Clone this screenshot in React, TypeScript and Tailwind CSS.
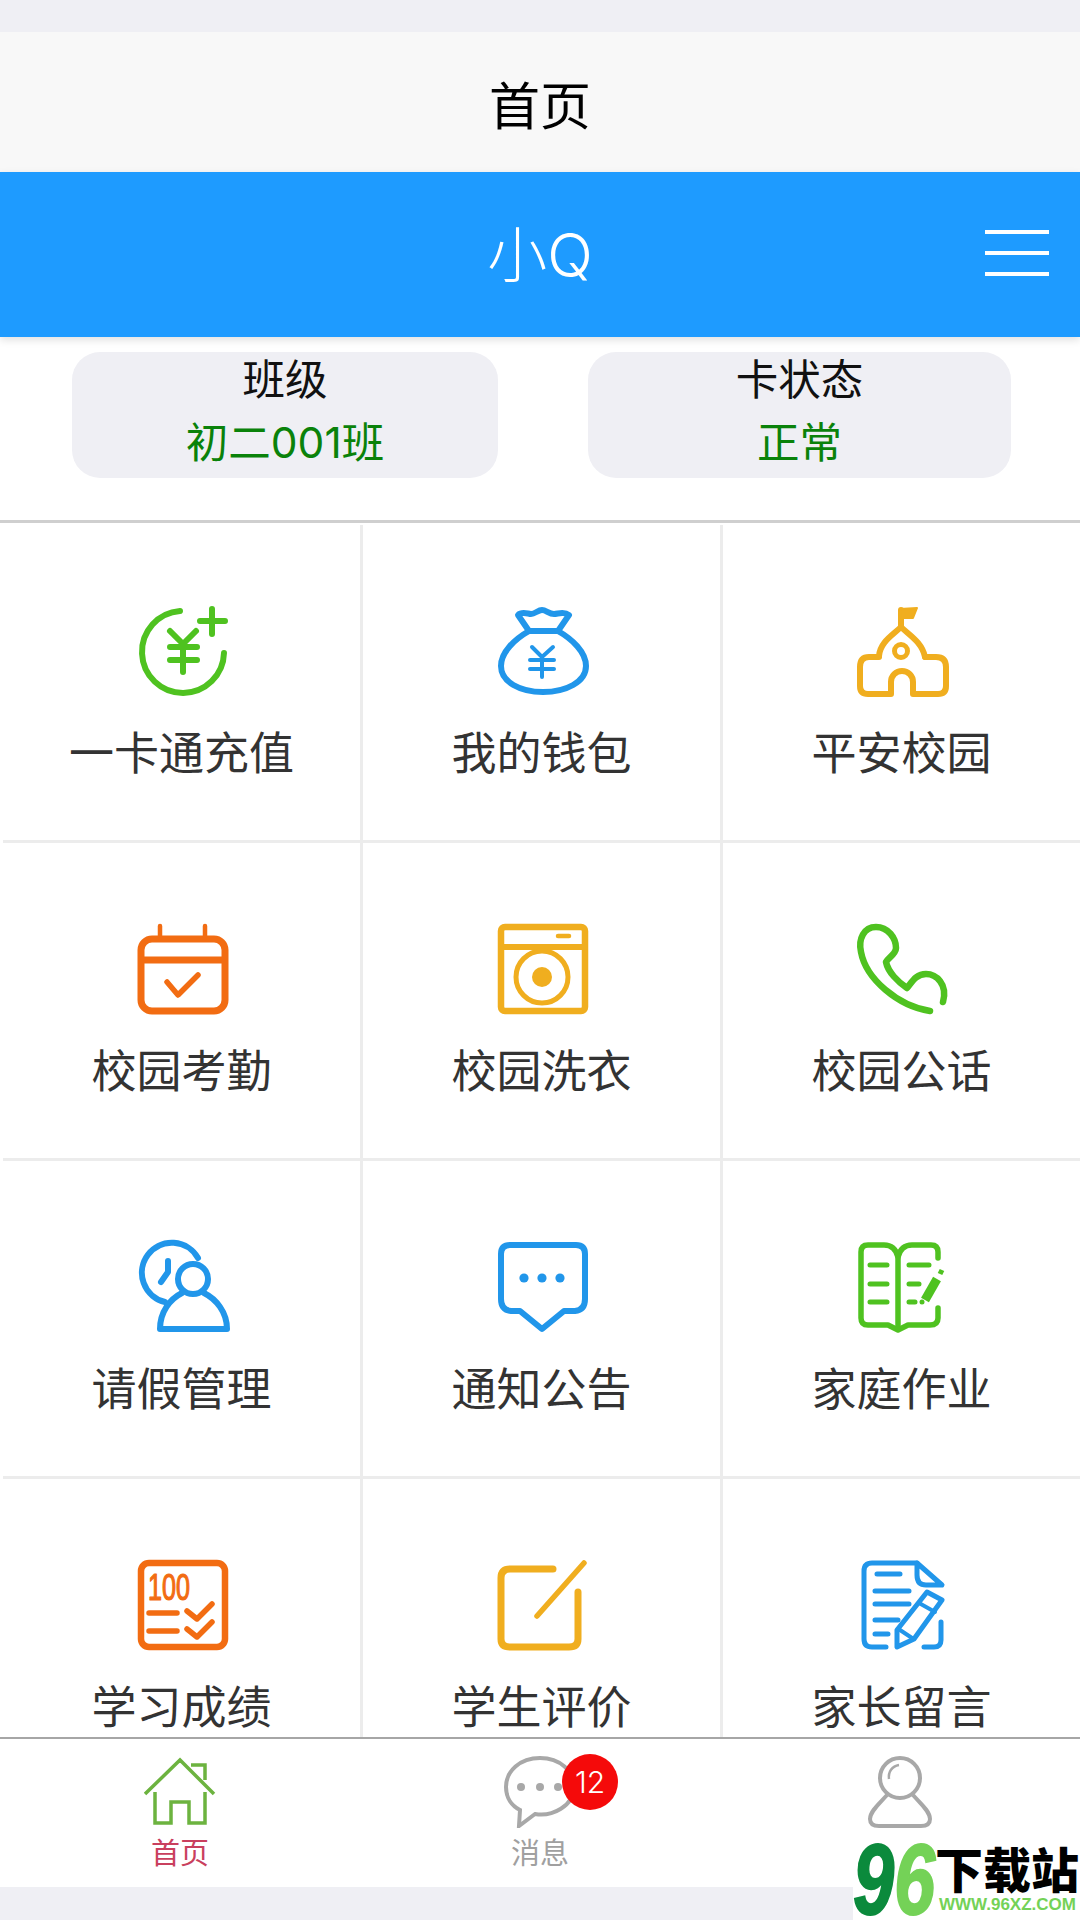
import React from "react";

const GREEN = "#4fc220";
const BLUE = "#2196ea";
const AMBER = "#f0ae1f";
const ORANGE = "#f26c12";

type IconProps = { c: string; children: React.ReactNode };
const Ico = ({ c, children }: IconProps) => (
  <svg className="overflow-visible" width="90" height="90" viewBox="0 0 90 90" fill="none" stroke={c} strokeWidth="6" strokeLinecap="round" strokeLinejoin="round">
    {children}
  </svg>
);

const icons: Record<string, React.ReactNode> = {
  recharge: (
    <Ico c={GREEN}>
      <path d="M42 5A41 41 0 1 0 86 47" />
      <path d="M32 25L45 38L58 25M32 41H59M32 54H59M45 38V66M62 15H87M74 3V28" />
    </Ico>
  ),
  wallet: (
    <Ico c={BLUE}>
      <path d="M31 25H60C74 33 88 46 88 60C88 76 68 86 45 86C22 86 3 76 3 60C3 46 17 33 31 25Z" />
      <path d="M31 25L20 9C24 5 30 8 33 8C37 8 40 4 44 4C48 4 51 8 56 8C60 8 66 5 71 9L60 25" />
      <path strokeWidth="4" d="M34 41L44 51L55 41M32 54H56M32 63H56M44 51V71" />
    </Ico>
  ),
  school: (
    <Ico c={AMBER}>
      <path d="M43 21V4" />
      <path fill={AMBER} strokeWidth="2" d="M42 3L59 2L55 12H43Z" />
      <path d="M21 50C22 36 35 29 43 21C51 29 64 36 67 51" />
      <path d="M21 51H11Q2 51 2 61V80Q2 88 10 88H33V76A11 11 0 0 1 55 76V88H80Q88 88 88 80V61Q88 51 78 51H67" />
      <circle cx="43" cy="45" r="6.5" strokeWidth="5" />
    </Ico>
  ),
  calendar: (
    <Ico c={ORANGE}>
      <rect x="3" y="15" width="84" height="72" rx="11" strokeWidth="7" />
      <path d="M3 36H87" strokeWidth="7" strokeLinecap="butt" />
      <path d="M22 2V14M67 2V14" strokeWidth="4.5" />
      <path d="M29 58L40 71L60 51" strokeWidth="5.5" />
    </Ico>
  ),
  washer: (
    <Ico c={AMBER}>
      <rect x="3" y="3" width="84" height="84" rx="4" strokeWidth="6.5" />
      <path d="M3 23H87" strokeWidth="6" />
      <path d="M60 12H71" strokeWidth="4.5" />
      <circle cx="44" cy="53" r="26" strokeWidth="5" />
      <circle cx="44" cy="53" r="10" fill={AMBER} stroke="none" />
    </Ico>
  ),
  phone: (
    <Ico c={GREEN}>
      <path d="M72 87C40 82 8 55 3 28C0 15 6 3 18 3C30 3 38 14 38 24C38 30 30 34 28 38C30 48 40 58 49 64C54 58 58 50 68 50C78 50 90 60 85 78" strokeWidth="6.5" />
    </Ico>
  ),
  leave: (
    <Ico c={BLUE}>
      <path d="M60 16A30 30 0 1 0 27 60" />
      <path d="M30 19V30L23 40" />
      <circle cx="55" cy="37" r="15" />
      <path d="M22 87H89C89 70 78 57 66 51M44 51C32 57 22 70 22 87" />
    </Ico>
  ),
  notice: (
    <Ico c={BLUE}>
      <path d="M12 3H78Q87 3 87 12V57Q87 68 77 69H66L44 87L22 69H13Q3 68 3 57V12Q3 3 12 3Z" />
      <circle cx="26" cy="36" r="4.6" fill={BLUE} stroke="none" />
      <circle cx="44" cy="36" r="4.6" fill={BLUE} stroke="none" />
      <circle cx="62" cy="36" r="4.6" fill={BLUE} stroke="none" />
    </Ico>
  ),
  homework: (
    <Ico c={GREEN}>
      <path d="M40 15C38 7 33 3 26 3H10Q3 3 3 10V76Q3 83 10 83H30L40 88L50 83H72Q80 83 80 76V66" strokeWidth="5.5" />
      <path d="M80 16V10Q80 3 73 3H54C47 3 42 7 40 15V86" strokeWidth="5.5" />
      <path d="M12 23H29M12 42H29M12 60H29M51 23H71M51 42H61M51 60H57" strokeWidth="5" />
      <circle cx="64" cy="60" r="2.5" fill={GREEN} stroke="none" />
      <path d="M67 58L79 37" strokeWidth="9" strokeLinecap="butt" />
      <path d="M82 32L84 28" strokeWidth="5" strokeLinecap="butt" />
    </Ico>
  ),
  score: (
    <Ico c={ORANGE}>
      <rect x="3" y="3" width="84" height="84" rx="8" strokeWidth="6.5" />
      <text x="10" y="40" fontSize="36" fontFamily="'Liberation Sans',sans-serif" fill={ORANGE} stroke={ORANGE} strokeWidth="1.2" textLength="42" lengthAdjust="spacingAndGlyphs">100</text>
      <path d="M11 53H39M11 71H39M49 51L59 59L74 44M49 69L59 77L74 62" strokeWidth="5.5" />
    </Ico>
  ),
  review: (
    <Ico c={AMBER}>
      <path d="M55 9H12Q3 9 3 18V79Q3 87 12 87H71Q80 87 80 79V32" strokeWidth="7" />
      <path d="M86 3L39 56" strokeWidth="5.5" />
    </Ico>
  ),
  message: (
    <Ico c={BLUE}>
      <path d="M59 3H14Q6 3 6 11V79Q6 87 14 87H28" strokeWidth="5" />
      <path d="M59 3L84 25H68Q59 25 59 15Z" strokeWidth="5" />
      <path d="M19 14H42M17 31H51M17 44H51M17 60H40M17 74H30" strokeWidth="5" />
      <path d="M69 32L84 40L56 79L39 87L39 70Z" strokeWidth="5" />
      <path d="M61 43L77 52M42 70L54 78" strokeWidth="4" />
      <path d="M83 62V80Q83 87 76 87H66" strokeWidth="5" />
    </Ico>
  ),
};

const items: [string, string][] = [
  ["recharge", "一卡通充值"],
  ["wallet", "我的钱包"],
  ["school", "平安校园"],
  ["calendar", "校园考勤"],
  ["washer", "校园洗衣"],
  ["phone", "校园公话"],
  ["leave", "请假管理"],
  ["notice", "通知公告"],
  ["homework", "家庭作业"],
  ["score", "学习成绩"],
  ["review", "学生评价"],
  ["message", "家长留言"],
];

const font = { fontFamily: "'Inter','Noto Sans CJK SC',sans-serif" };

export default function App() {
  return (
    <div className="relative flex h-[1920px] w-[1080px] flex-col overflow-hidden bg-white" style={font}>
      <div className="h-8 shrink-0 bg-[#efeff4]" />
      <div className="flex h-[140px] shrink-0 items-center justify-center bg-[#f8f8f8] pt-[11px] text-[51px] text-black">首页</div>
      <div className="relative z-10 flex h-[165px] shrink-0 items-center justify-center bg-[#1e9bff] text-[60px] font-light text-white shadow-[0_3px_8px_rgba(0,0,0,0.12)]">
        <span>小Q</span>
        <div className="absolute left-[985px] top-[58px] flex w-[64px] flex-col gap-[17px]">
          <div className="h-1 bg-white" />
          <div className="h-1 bg-white" />
          <div className="h-1 bg-white" />
        </div>
      </div>
      <div className="flex h-[183px] shrink-0 gap-[90px] pl-[72px] pt-[15px] text-[42.5px]">
        <div className="h-[126px] w-[426px] rounded-[28px] bg-[#efeff4] text-center">
          <div className="leading-[56px] text-[#111]">班级</div>
          <div className="mt-[6px] leading-[58px] text-[#0a820a]">初二001班</div>
        </div>
        <div className="h-[126px] w-[423px] rounded-[28px] bg-[#efeff4] text-center">
          <div className="leading-[56px] text-[#111]">卡状态</div>
          <div className="mt-[6px] leading-[58px] text-[#0a820a]">正常</div>
        </div>
      </div>
      <div className="min-h-0 flex-1 overflow-hidden border-t-[3px] border-[#cfcfcf] pl-[3px] pt-[2px]">
        <div className="grid grid-cols-[360px_360px_360px]">
          {items.map(([k, label]) => (
            <div key={k} className="flex h-[318px] flex-col items-center border-b-[3px] border-r-[3px] border-[#ececec] pt-[81px]">
              <div className="ml-[3px]">{icons[k]}</div>
              <div className="mt-[32px] text-[45px] leading-[52px] text-[#333]">{label}</div>
            </div>
          ))}
        </div>
      </div>
      <div className="grid h-[150px] shrink-0 grid-cols-3 border-t-2 border-[#a6a6a6] bg-white pt-[17px]">
        <div className="flex flex-col items-center">
          <svg width="72" height="72" viewBox="0 0 72 72" fill="none" stroke="#6cb33f" strokeWidth="3.5">
            <path d="M1 38L36 4L70 38M47 9H61V24M11 36V67H27V46H45V67H61V36" />
          </svg>
          <div className="mt-[6px] text-[29px] leading-[40px] text-[#c9405e]">首页</div>
        </div>
        <div className="flex flex-col items-center">
          <div className="relative h-[72px] w-[72px]">
            <svg width="72" height="72" viewBox="0 0 72 72" fill="none" stroke="#a8a8a8" strokeWidth="4">
              <path d="M36 2C16 2 2 15 2 31C2 42 8 50 16 54L15 70L31 58C48 61 70 50 70 31C70 15 56 2 36 2Z" />
              <circle cx="17" cy="31" r="4" fill="#a8a8a8" stroke="none" />
              <circle cx="36" cy="31" r="4" fill="#a8a8a8" stroke="none" />
              <circle cx="54" cy="31" r="4" fill="#a8a8a8" stroke="none" />
            </svg>
            <div className="absolute left-[58px] top-[-2px] flex h-[56px] w-[56px] items-center justify-center rounded-full bg-[#f50a0a] text-[30px] font-light text-white">12</div>
          </div>
          <div className="mt-[6px] text-[29px] leading-[40px] text-[#a0a0a0]">消息</div>
        </div>
        <div className="flex flex-col items-center">
          <svg width="72" height="72" viewBox="0 0 72 72" fill="none" stroke="#a8a8a8" strokeWidth="4">
            <circle cx="36" cy="22" r="20" />
            <path d="M23 39C16 47 6 55 6 63C6 68 10 70 15 70H57C62 70 66 68 66 63C66 55 56 47 49 39" />
            <path d="M25 23C24 16 28 10 35 9" strokeWidth="2.5" />
          </svg>
        </div>
      </div>
      <div className="h-[33px] shrink-0 bg-[#efeff4]" />
      <div className="absolute left-[853px] top-[1838px] flex h-[82px] w-[227px] bg-white">
        <div className="flex h-[82px] w-[82px] shrink-0 items-center text-[100px] font-bold italic leading-[82px]" style={{ fontFamily: "'Liberation Sans',sans-serif" }}>
          <span className="origin-left scale-x-[0.74] text-[#0b8a3c] [-webkit-text-stroke:2px_#0b8a3c]">9</span>
          <span className="-ml-[15px] origin-left scale-x-[0.74] text-[#74d257] [-webkit-text-stroke:2px_#74d257]">6</span>
        </div>
        <div className="flex flex-col">
          <div className="mt-[2px] whitespace-nowrap text-[48px] font-black leading-[54px] text-black" style={{ fontFamily: "'Noto Sans CJK SC',sans-serif" }}>下载站</div>
          <div className="ml-[4px] mt-[2px] whitespace-nowrap text-[17px] font-bold leading-[18px] text-[#74d257]" style={{ fontFamily: "'Liberation Sans',sans-serif" }}>WWW.96XZ.COM</div>
        </div>
      </div>
    </div>
  );
}
